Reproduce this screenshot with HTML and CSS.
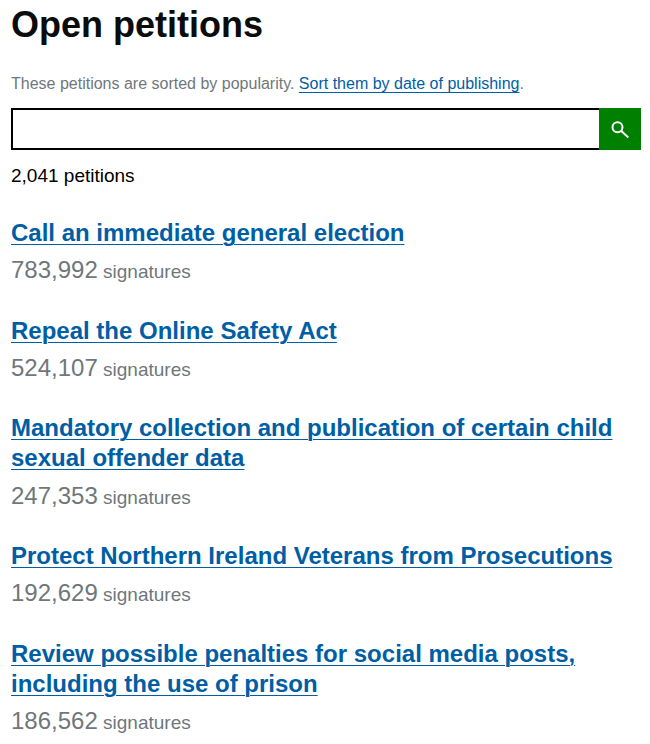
FILE: index.html
```html
<!DOCTYPE html>
<html lang="en">

<head>
    <meta charset="UTF-8">
    <meta name="viewport" content="width=device-width, initial-scale=1.0">
    <title>Open petitions</title>
    <link rel="stylesheet" href="styles.css">
</head>

<body>
    <h1>Open petitions</h1>
    <p class="sort-note">These petitions are sorted by popularity. <a href="#">Sort them by date of publishing</a>.</p>

    <form class="search">
        <input class="search-input" type="text" aria-label="Search petitions">
        <button class="search-button" type="button" aria-label="Search">
            <svg width="20" height="20" viewBox="0 0 20 20" fill="none" stroke="#fff">
                <circle cx="7.5" cy="8.2" r="5" stroke-width="2"/>
                <path d="M11.3 12L18.3 18.6" stroke-width="2"/>
            </svg>
        </button>
    </form>

    <p class="count">2,041 petitions</p>

    <ul class="petitions">
        <li>
            <h2><a href="#">Call an immediate general election</a></h2>
            <p class="signatures"><span class="number">783,992</span> signatures</p>
        </li>
        <li>
            <h2><a href="#">Repeal the Online Safety Act</a></h2>
            <p class="signatures"><span class="number">524,107</span> signatures</p>
        </li>
        <li>
            <h2><a href="#">Mandatory collection and publication of certain child sexual offender data</a></h2>
            <p class="signatures"><span class="number">247,353</span> signatures</p>
        </li>
        <li>
            <h2><a href="#">Protect Northern Ireland Veterans from Prosecutions</a></h2>
            <p class="signatures"><span class="number">192,629</span> signatures</p>
        </li>
        <li>
            <h2><a href="#">Review possible penalties for social media posts, including the use of prison</a></h2>
            <p class="signatures"><span class="number">186,562</span> signatures</p>
        </li>
    </ul>
</body>

</html>
```

FILE: styles.css
```css
body {
    font-family: "Liberation Sans", Arial, sans-serif;
    margin: 0;
    padding: 0 9px 0 11px;
    color: #0b0c0c;
    background-color: #fff;
    height: 744px;
    overflow: hidden;
}

a {
    color: #005ea5;
    text-decoration-thickness: 1px;
    text-underline-offset: 3px;
}

h1 {
    font-size: 36px;
    line-height: 40px;
    font-weight: bold;
    margin: 5px 0 0;
}

.sort-note {
    font-size: 16px;
    line-height: 20px;
    color: #6f777b;
    margin: 29px 0 0;
}

.search {
    display: flex;
    margin-top: 14px;
    height: 42px;
}

.search-input {
    flex: 1;
    min-width: 0;
    box-sizing: border-box;
    height: 42px;
    border: 2px solid #000;
    border-right: none;
    padding: 0 8px;
    outline: none;
}

.search-button {
    width: 42px;
    height: 42px;
    padding: 0;
    border: none;
    background-color: #008000;
    display: flex;
    align-items: center;
    justify-content: center;
}

.count {
    font-size: 19px;
    line-height: 25px;
    color: #000;
    margin: 13px 0 0;
}

.petitions {
    list-style: none;
    margin: 0;
    padding: 1.8px 0 0;
}

.petitions li {
    margin-top: 28.4px;
}

.petitions h2 {
    font-size: 24px;
    line-height: 30px;
    font-weight: bold;
    margin: 0;
}

.signatures {
    font-size: 19px;
    line-height: 30px;
    color: #6f777b;
    margin: 7.2px 0 0;
}

.number {
    font-size: 24px;
}
```
